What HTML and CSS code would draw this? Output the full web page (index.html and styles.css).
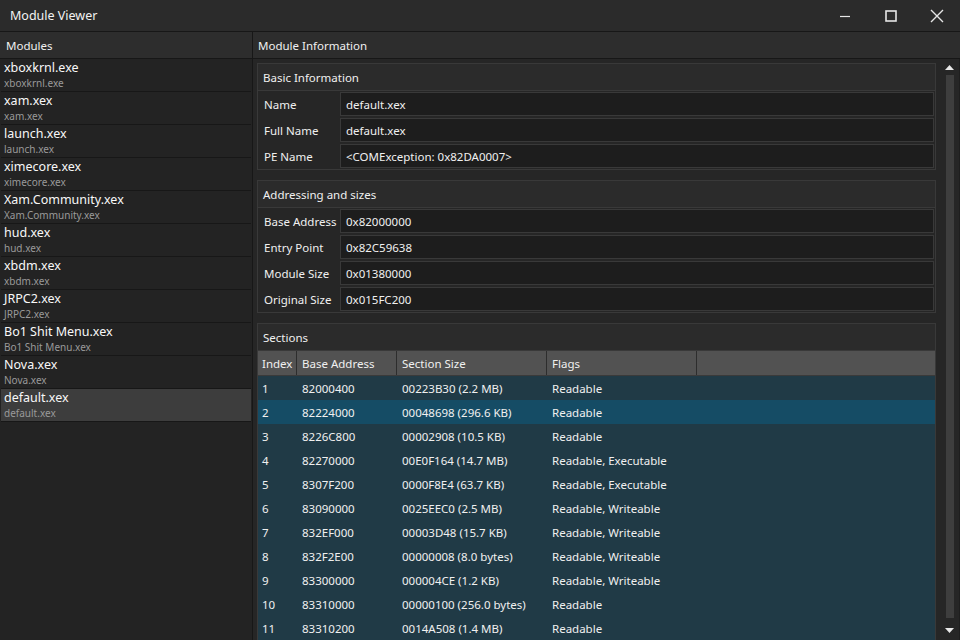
FILE: index.html
```html
<!DOCTYPE html>
<html>
<head>
<meta charset="utf-8">
<link rel="stylesheet" href="styles.css">
</head>
<body>
<div class="window">
  <div class="titlebar">
    <span class="title">Module Viewer</span>
    <div class="controls">
      <span class="ctl"><svg width="12" height="12" viewBox="0 0 12 12"><path d="M1 6.5h10" stroke="#e6e6e6" stroke-width="1.2"/></svg></span>
      <span class="ctl"><svg width="12" height="12" viewBox="0 0 12 12"><rect x="1" y="1" width="10" height="10" fill="none" stroke="#e6e6e6" stroke-width="1.6"/></svg></span>
      <span class="ctl"><svg width="14" height="14" viewBox="0 0 14 14"><path d="M1 1L13 13M13 1L1 13" stroke="#e6e6e6" stroke-width="1.4"/></svg></span>
    </div>
  </div>
  <div class="main">
    <div class="left">
      <div class="phead">Modules</div>
      <ul class="mods">
        <li><b>xboxkrnl.exe</b><small>xboxkrnl.exe</small></li>
        <li><b>xam.xex</b><small>xam.xex</small></li>
        <li><b>launch.xex</b><small>launch.xex</small></li>
        <li><b>ximecore.xex</b><small>ximecore.xex</small></li>
        <li><b>Xam.Community.xex</b><small>Xam.Community.xex</small></li>
        <li><b>hud.xex</b><small>hud.xex</small></li>
        <li><b>xbdm.xex</b><small>xbdm.xex</small></li>
        <li><b>JRPC2.xex</b><small>JRPC2.xex</small></li>
        <li><b>Bo1 Shit Menu.xex</b><small>Bo1 Shit Menu.xex</small></li>
        <li><b>Nova.xex</b><small>Nova.xex</small></li>
        <li class="sel"><b>default.xex</b><small>default.xex</small></li>
      </ul>
    </div>
    <div class="right">
      <div class="phead">Module Information</div>
      <div class="scrollarea">
        <div class="content">
          <div class="group">
            <div class="ghead">Basic Information</div>
            <div class="gbody">
              <div class="field"><span class="lbl">Name</span><span class="val">default.xex</span></div>
              <div class="field"><span class="lbl">Full Name</span><span class="val">default.xex</span></div>
              <div class="field"><span class="lbl">PE Name</span><span class="val">&lt;COMException: 0x82DA0007&gt;</span></div>
            </div>
          </div>
          <div class="group">
            <div class="ghead">Addressing and sizes</div>
            <div class="gbody">
              <div class="field"><span class="lbl">Base Address</span><span class="val">0x82000000</span></div>
              <div class="field"><span class="lbl">Entry Point</span><span class="val">0x82C59638</span></div>
              <div class="field"><span class="lbl">Module Size</span><span class="val">0x01380000</span></div>
              <div class="field"><span class="lbl">Original Size</span><span class="val">0x015FC200</span></div>
            </div>
          </div>
          <div class="group sections">
            <div class="ghead">Sections</div>
            <div class="table">
              <div class="trow thead"><span>Index</span><span>Base Address</span><span>Section Size</span><span>Flags</span><span></span></div>
              <div class="trow"><span>1</span><span>82000400</span><span>00223B30 (2.2 MB)</span><span>Readable</span><span></span></div>
              <div class="trow sel"><span>2</span><span>82224000</span><span>00048698 (296.6 KB)</span><span>Readable</span><span></span></div>
              <div class="trow"><span>3</span><span>8226C800</span><span>00002908 (10.5 KB)</span><span>Readable</span><span></span></div>
              <div class="trow"><span>4</span><span>82270000</span><span>00E0F164 (14.7 MB)</span><span>Readable, Executable</span><span></span></div>
              <div class="trow"><span>5</span><span>8307F200</span><span>0000F8E4 (63.7 KB)</span><span>Readable, Executable</span><span></span></div>
              <div class="trow"><span>6</span><span>83090000</span><span>0025EEC0 (2.5 MB)</span><span>Readable, Writeable</span><span></span></div>
              <div class="trow"><span>7</span><span>832EF000</span><span>00003D48 (15.7 KB)</span><span>Readable, Writeable</span><span></span></div>
              <div class="trow"><span>8</span><span>832F2E00</span><span>00000008 (8.0 bytes)</span><span>Readable, Writeable</span><span></span></div>
              <div class="trow"><span>9</span><span>83300000</span><span>000004CE (1.2 KB)</span><span>Readable, Writeable</span><span></span></div>
              <div class="trow"><span>10</span><span>83310000</span><span>00000100 (256.0 bytes)</span><span>Readable</span><span></span></div>
              <div class="trow"><span>11</span><span>83310200</span><span>0014A508 (1.4 MB)</span><span>Readable</span><span></span></div>
            </div>
          </div>
        </div>
        <div class="scrollbar">
          <svg class="arrow" width="9" height="5" viewBox="0 0 9 5"><path d="M0 5L4.5 0L9 5Z" fill="#e8e8e8"/></svg>
          <div class="thumb"></div>
          <svg class="arrow" width="9" height="5" viewBox="0 0 9 5"><path d="M0 0L4.5 5L9 0Z" fill="#e8e8e8"/></svg>
        </div>
      </div>
    </div>
  </div>
</div>
</body>
</html>
```
FILE: styles.css
```css
* { box-sizing: border-box; margin: 0; padding: 0; }
html, body { width: 960px; height: 640px; overflow: hidden; background: #262626; }
body { font-family: "Segoe UI", "Noto Sans", "Open Sans", sans-serif; font-size: 11.5px; color: #f0f0f0; }
.window { width: 960px; height: 640px; display: flex; flex-direction: column; }
.titlebar { height: 32px; background: #2b2b2b; border-bottom: 1px solid #171717; display: flex; align-items: center; justify-content: space-between; padding-left: 10px; flex: none; }
.title { font-size: 12.5px; color: #f2f2f2; }
.controls { display: flex; height: 31px; }
.ctl { width: 46px; display: flex; align-items: center; justify-content: center; }
.main { flex: 1; display: flex; min-height: 0; }
.left { width: 253px; background: #232323; border-right: 1px solid #171717; display: flex; flex-direction: column; flex: none; }
.phead { height: 27px; background: #2d2d2d; border-bottom: 1px solid #171717; padding-left: 6px; display: flex; align-items: center; color: #f0f0f0; flex: none; }
.right .phead { padding-left: 5px; }
.mods { list-style: none; }
.mods li { height: 33px; border-bottom: 1px solid #171717; padding-left: 3px; display: flex; flex-direction: column; justify-content: flex-start; margin: 0 1px; }
.mods li b { font-weight: 400; font-size: 12.5px; line-height: 17px; height: 17px; color: #f8f8f8; }
.mods li small { font-size: 10px; line-height: 14px; height: 14px; color: #9a9a9a; }
.mods li.sel { background: #3d3d3d; }
.right { flex: 1; display: flex; flex-direction: column; min-width: 0; }
.scrollarea { flex: 1; display: flex; min-height: 0; background: #262626; }
.content { flex: 1; padding: 4px 4px 0 4px; display: flex; flex-direction: column; gap: 10px; overflow: hidden; }
.group { border: 1px solid #393939; background: #262626; flex: none; }
.ghead { height: 27px; background: #2b2b2b; border-bottom: 1px solid #393939; padding-left: 5px; display: flex; align-items: center; }
.gbody { padding: 1px 1px 1px 6px; display: flex; flex-direction: column; gap: 2px; }
.field { display: flex; height: 24px; }
.lbl { width: 76px; display: flex; align-items: center; color: #f0f0f0; padding-top: 1px; }
.val { flex: 1; background: #1d1d1d; border: 1px solid #393939; display: flex; align-items: center; padding-left: 5px; padding-top: 1px; color: #f0f0f0; }
.sections { flex: 1; border-bottom: none; }
.table { display: flex; flex-direction: column; }
.trow { display: grid; grid-template-columns: 39px 100px 150px 150px 1fr; height: 24px; background: #203a46; }
.trow span { display: flex; align-items: center; padding-left: 5px; white-space: nowrap; }
.trow span:first-child { padding-left: 4px; }
.trow.sel { background: #154c65; }
.thead { background: #525252; height: 25px; border-bottom: 1px solid #3a3a3a; }
.thead span { border-right: 1px solid #2d2d2d; }
.thead span:last-child { border-right: none; }
.scrollbar { width: 20px; flex: none; display: flex; flex-direction: column; align-items: center; padding: 6px 0 7px; border-right: 1px solid #1e1e1e; }
.thumb { width: 8px; flex: 1; background: #3e3e3e; margin: 5px 0 10px; }
.arrow { flex: none; }
```
